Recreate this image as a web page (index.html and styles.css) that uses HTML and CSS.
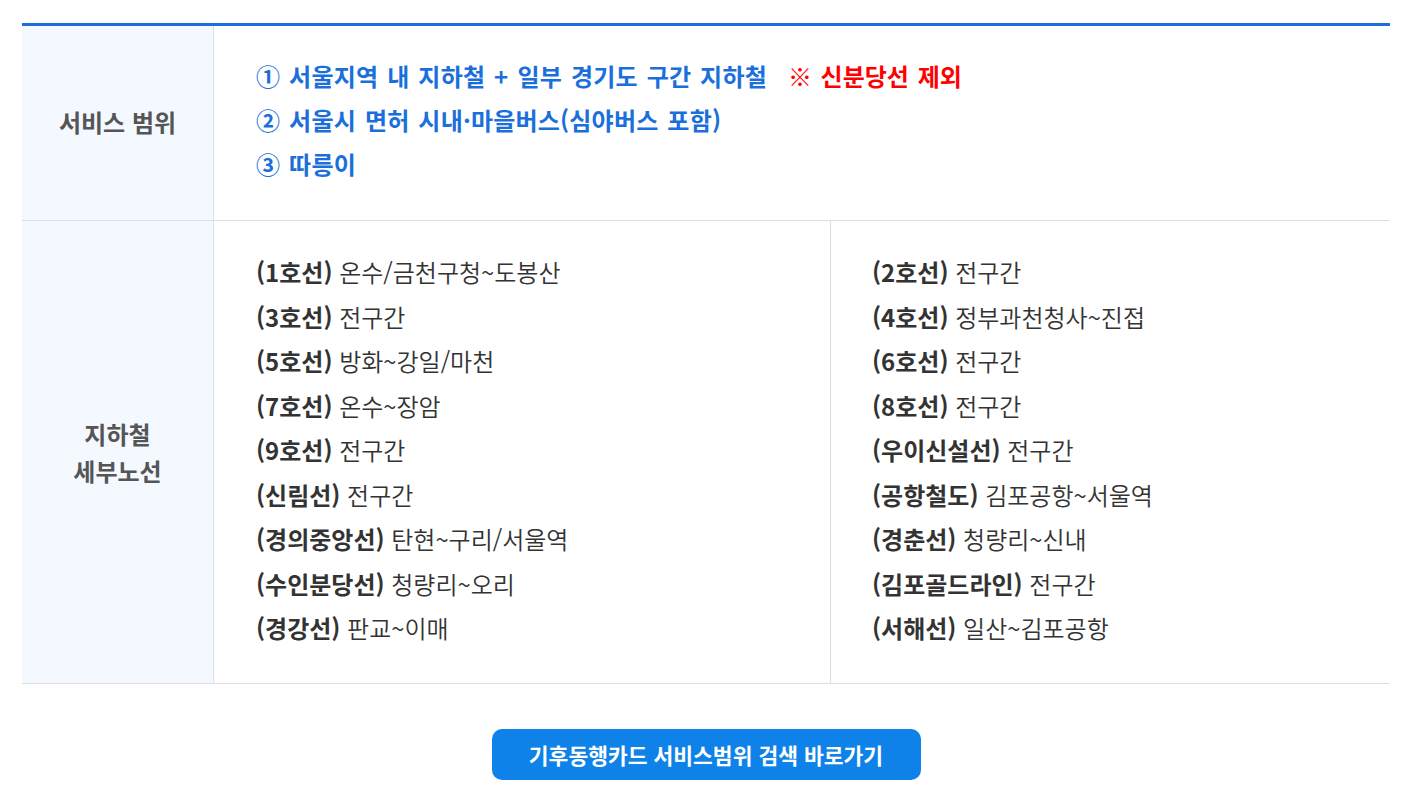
FILE: index.html
```html
<!DOCTYPE html>
<html lang="ko">
<head>
<meta charset="utf-8">
<link rel="stylesheet" href="styles.css">
</head>
<body>
<div class="wrap">
  <div class="table">
    <div class="row row-scope">
      <div class="th">서비스 범위</div>
      <div class="td scope">
        <p>① 서울지역 내 지하철 + 일부 경기도 구간 지하철 <span class="red">※ 신분당선 제외</span></p>
        <p>② 서울시 면허 시내·마을버스(심야버스 포함)</p>
        <p>③ 따릉이</p>
      </div>
    </div>
    <div class="row row-lines">
      <div class="th">지하철<br>세부노선</div>
      <div class="td lines">
        <ul class="col">
          <li><b>(1호선)</b> 온수/금천구청~도봉산</li>
          <li><b>(3호선)</b> 전구간</li>
          <li><b>(5호선)</b> 방화~강일/마천</li>
          <li><b>(7호선)</b> 온수~장암</li>
          <li><b>(9호선)</b> 전구간</li>
          <li><b>(신림선)</b> 전구간</li>
          <li><b>(경의중앙선)</b> 탄현~구리/서울역</li>
          <li><b>(수인분당선)</b> 청량리~오리</li>
          <li><b>(경강선)</b> 판교~이매</li>
        </ul>
        <ul class="col col-right">
          <li><b>(2호선)</b> 전구간</li>
          <li><b>(4호선)</b> 정부과천청사~진접</li>
          <li><b>(6호선)</b> 전구간</li>
          <li><b>(8호선)</b> 전구간</li>
          <li><b>(우이신설선)</b> 전구간</li>
          <li><b>(공항철도)</b> 김포공항~서울역</li>
          <li><b>(경춘선)</b> 청량리~신내</li>
          <li><b>(김포골드라인)</b> 전구간</li>
          <li><b>(서해선)</b> 일산~김포공항</li>
        </ul>
      </div>
    </div>
  </div>
  <div class="btn-area">
    <a class="btn" href="#">기후동행카드 서비스범위 검색 바로가기</a>
  </div>
</div>
</body>
</html>
```

FILE: styles.css
```css
html, body {
  margin: 0;
  padding: 0;
  background: #fff;
}
body {
  font-family: "Noto Sans CJK KR", "Noto Sans", sans-serif;
  color: #333;
}
.wrap {
  padding: 23px 27px 0 22px;
}
.table {
  border-top: 3px solid #1a6fdb;
}
.row {
  display: flex;
  border-bottom: 1px solid #dedede;
}
.th {
  width: 191px;
  flex: none;
  background: #f4f8ff;
  border-right: 1px solid #dedede;
  display: flex;
  align-items: center;
  justify-content: center;
  text-align: center;
  font-size: 24px;
  font-weight: 700;
  color: #555;
  line-height: 37px;
}
.row-scope .th {
  padding-bottom: 4px;
}
.td {
  flex: 1;
}
.scope {
  padding: 28px 0 34px 42px;
  font-size: 24px;
  font-weight: 700;
  color: #1a6fdb;
  line-height: 44px;
  word-spacing: 2px;
  letter-spacing: 0.2px;
}
.scope p {
  margin: 0;
}
.red {
  color: #ff0000;
  margin-left: 12px;
  letter-spacing: 0;
}
.lines {
  display: grid;
  grid-template-columns: 616px 1fr;
}
.col {
  list-style: none;
  margin: 0;
  padding: 29px 0 32px 42px;
  font-size: 24px;
  font-weight: 350;
  line-height: 44.5px;
  color: #333;
}
.col b {
  font-weight: 700;
  color: #333;
}
.col-right {
  border-left: 1px solid #dedede;
  padding-left: 41px;
}
.btn-area {
  display: flex;
  justify-content: center;
  padding-top: 45px;
}
.btn {
  display: block;
  width: 429px;
  height: 51px;
  line-height: 51px;
  text-align: center;
  background: #0e82e8;
  color: #fff;
  font-size: 21.5px;
  font-weight: 700;
  border-radius: 10px;
  text-decoration: none;
}
```
